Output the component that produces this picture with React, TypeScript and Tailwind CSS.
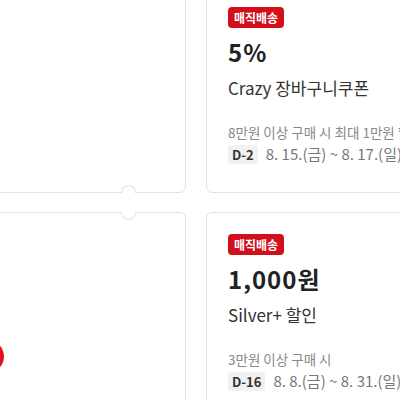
import React from 'react';

type Coupon = {
  amount: string;
  title: string;
  cond: string;
  dday: string;
  period: string;
};

const coupons: Coupon[] = [
  {
    amount: '5%',
    title: 'Crazy 장바구니쿠폰',
    cond: '8만원 이상 구매 시 최대 1만원 할인',
    dday: 'D-2',
    period: '8. 15.(금) ~ 8. 17.(일)',
  },
  {
    amount: '1,000원',
    title: 'Silver+ 할인',
    cond: '3만원 이상 구매 시',
    dday: 'D-16',
    period: '8. 8.(금) ~ 8. 31.(일)',
  },
];

const font = { fontFamily: '"Noto Sans CJK KR", "Noto Sans", sans-serif' };

const LeftCard: React.FC<{ top?: boolean; red?: boolean }> = ({ top, red }) => (
  <div className="relative h-[208px] w-[300px] shrink-0 rounded-[6px] border border-[#e3e3e3] bg-white">
    {top ? (
      <div className="absolute bottom-[-1px] left-[234px] h-[8px] w-[15px] rounded-t-full border border-b-0 border-[#e3e3e3] bg-white" />
    ) : (
      <div className="absolute top-[-1px] left-[234px] h-[8px] w-[15px] rounded-b-full border border-t-0 border-[#e3e3e3] bg-white" />
    )}
    {red && (
      <div className="absolute left-[79px] top-[127px] h-[33px] w-[38px] rounded-full bg-[#e0101e]" />
    )}
  </div>
);

const CouponCard: React.FC<{ c: Coupon }> = ({ c }) => (
  <div
    className="flex h-[208px] w-[300px] shrink-0 flex-col rounded-[6px] border border-[#e3e3e3] bg-white pl-[21px] pt-[21px]"
    style={font}
  >
    <div className="flex">
      <span className="flex h-[21px] items-center rounded-[4px] bg-[#d2101c] px-[6px] text-[12px] font-bold text-white">
        매직배송
      </span>
    </div>
    <div className="mt-[8px] text-[24px] font-bold leading-[32px] tracking-[1px] text-[#222]">{c.amount}</div>
    <div className="mt-[8px] text-[17px] leading-[24px] text-[#333]">{c.title}</div>
    <div className="mt-[22px] whitespace-nowrap text-[13.5px] leading-[20px] text-[#888]">{c.cond}</div>
    <div className="mt-[2px] flex items-center gap-[8px] whitespace-nowrap">
      <span className="rounded-[2px] bg-[#f1f1f1] px-[4px] text-[13px] font-bold leading-[19px] text-[#333]">
        {c.dday}
      </span>
      <span className="text-[15px] leading-[20px] text-[#777]">{c.period}</span>
    </div>
  </div>
);

export default function App() {
  return (
    <div className="h-[400px] w-[400px] overflow-hidden bg-white">
      <div className="ml-[-114px] mt-[-15px] flex flex-col gap-[19px]">
        <div className="flex gap-[20px]">
          <LeftCard top />
          <CouponCard c={coupons[0]} />
        </div>
        <div className="flex gap-[20px]">
          <LeftCard red />
          <CouponCard c={coupons[1]} />
        </div>
      </div>
    </div>
  );
}
